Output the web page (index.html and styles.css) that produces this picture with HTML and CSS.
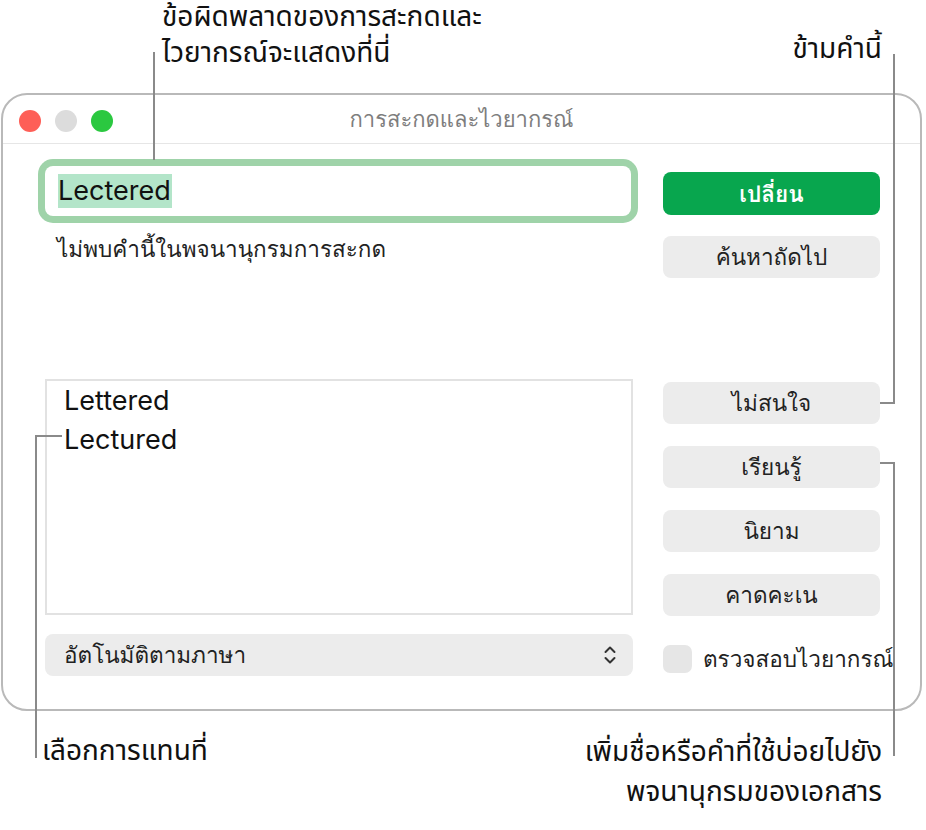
FILE: index.html
```html
<!DOCTYPE html>
<html lang="th">
<head>
<meta charset="utf-8">
<title>การสะกดและไวยากรณ์</title>
<link rel="stylesheet" href="styles.css">
</head>
<body>
<div class="page">
  <header class="notes-top">
    <p class="note note-left">ข้อผิดพลาดของการสะกดและ<br>ไวยากรณ์จะแสดงที่นี่</p>
    <p class="note note-right">ข้ามคำนี้</p>
  </header>

  <section class="window">
    <div class="titlebar">
      <div class="lights">
        <span class="light red"></span>
        <span class="light gray"></span>
        <span class="light green"></span>
      </div>
      <div class="title">การสะกดและไวยากรณ์</div>
    </div>
    <div class="content">
      <div class="col-left">
        <div class="field"><span class="sel">Lectered</span></div>
        <p class="message">ไม่พบคำนี้ในพจนานุกรมการสะกด</p>
        <ul class="list">
          <li>Lettered</li>
          <li>Lectured</li>
        </ul>
        <div class="popup">
          <span>อัตโนมัติตามภาษา</span>
          <svg class="chev" width="12" height="20" viewBox="0 0 12 20"><path d="M1.5 7 L6 2.5 L10.5 7 M1.5 13 L6 17.5 L10.5 13" fill="none" stroke="#333" stroke-width="2" stroke-linecap="round" stroke-linejoin="round"/></svg>
        </div>
      </div>
      <div class="col-right">
        <button class="btn primary">เปลี่ยน</button>
        <button class="btn b-next">ค้นหาถัดไป</button>
        <button class="btn b-ignore">ไม่สนใจ</button>
        <button class="btn">เรียนรู้</button>
        <button class="btn">นิยาม</button>
        <button class="btn">คาดคะเน</button>
        <label class="check"><span class="box"></span><span class="check-label">ตรวจสอบไวยากรณ์</span></label>
      </div>
    </div>
  </section>

  <footer class="notes-bottom">
    <p class="note note-bl">เลือกการแทนที่</p>
    <p class="note note-br">เพิ่มชื่อหรือคำที่ใช้บ่อยไปยัง<br>พจนานุกรมของเอกสาร</p>
  </footer>

  <span class="line l-top"></span>
  <span class="line l-skip-v"></span>
  <span class="line l-skip-h"></span>
  <span class="line l-choose-h"></span>
  <span class="line l-choose-v"></span>
  <span class="line l-learn-h"></span>
  <span class="line l-learn-v"></span>
</div>
</body>
</html>
```
FILE: styles.css
```css
* { box-sizing: border-box; }
html, body { margin: 0; padding: 0; background: #fff; }
body { width: 926px; height: 830px; overflow: hidden; }
.page {
  position: relative;
  width: 926px;
  height: 830px;
  font-family: "Noto Sans Thai", "Noto Sans", "Inter", sans-serif;
  color: #111;
}
p { margin: 0; }

.notes-top {
  height: 93px;
  display: flex;
  justify-content: space-between;
}
.note { font-size: 28px; line-height: 36px; color: #111; }
.note-left { padding-left: 162px; }
.note-right { padding-top: 32px; padding-right: 44px; }

.window {
  margin-left: 1px;
  width: 921px;
  height: 618px;
  border: 2px solid #b9b9b9;
  border-radius: 26px;
  background: #fff;
  font-family: "Loma", "Garuda", "Waree", "Noto Sans Thai Looped", "Noto Sans Thai", "Noto Sans", sans-serif;
}
.titlebar {
  position: relative;
  height: 49px;
  border-bottom: 1px solid #e6e6e6;
  display: flex;
  align-items: center;
  justify-content: center;
}
.lights {
  position: absolute;
  left: 16px;
  top: 15px;
  display: flex;
  gap: 14px;
}
.light { width: 22px; height: 22px; border-radius: 50%; display: block; }
.red { background: #fe5f57; }
.gray { background: #dcdcdc; }
.green { background: #2bc840; }
.title { font-size: 22px; color: #7e7e7e; line-height: 30px; margin-top: 2px; }

.content {
  display: grid;
  grid-template-columns: 588px 217px;
  column-gap: 30px;
  padding: 15px 40px 0 42px;
}
.col-left { display: flex; flex-direction: column; }
.field {
  margin-top: 7px;
  width: 586px;
  height: 50px;
  border-radius: 8px;
  background: #fff;
  box-shadow: 0 0 0 7px #9fd3a9;
  padding: 8px 0 0 13px;
  font-family: "Inter", "Liberation Sans", sans-serif;
  font-size: 27px;
  line-height: 34px;
  color: #111;
}
.sel { background: #b3e5c9; display: inline-block; height: 34px; padding-right: 1px; }
.message { margin-top: 17px; padding-left: 12px; font-size: 22.5px; line-height: 32px; color: #222; }
.list {
  list-style: none;
  margin: 0;
  margin-top: 114px;
  height: 236px;
  border: 2px solid #e2e2e2;
  padding: 0 0 0 17px;
  font-family: "Inter", "Liberation Sans", sans-serif;
  font-size: 27px;
  line-height: 39px;
  color: #111;
}
.popup {
  margin-top: 19px;
  height: 42px;
  border-radius: 8px;
  background: #ececec;
  display: flex;
  align-items: center;
  justify-content: space-between;
  padding: 0 17px 0 19px;
  font-size: 22.5px;
  color: #222;
}
.chev { display: block; }

.col-right { display: flex; flex-direction: column; padding-top: 13px; }
.btn {
  height: 42px;
  border: 0;
  border-radius: 8px;
  background: #ececec;
  font-family: inherit;
  font-size: 22.5px;
  line-height: 30px;
  color: #222;
  padding: 0;
  margin-bottom: 22px;
}
.primary { background: #08a64e; color: #fff; font-weight: 600; height: 43px; margin-bottom: 21px; }
.b-next { margin-bottom: 104px; }
.check { display: flex; align-items: center; gap: 11px; margin-top: 3px; }
.box { width: 29px; height: 28px; border-radius: 7px; background: #e6e6e6; display: block; flex: none; }
.check-label { font-size: 22.5px; color: #222; white-space: nowrap; }

.notes-bottom {
  display: flex;
  justify-content: space-between;
  padding-top: 23px;
}
.note-bl { padding-left: 42px; }
.note-br { padding-right: 44px; text-align: right; line-height: 40px; margin-top: -1px; }

.line { position: absolute; background: #8a8a8a; display: block; }
.l-top { left: 153px; top: 52px; width: 2px; height: 108px; }
.l-skip-v { left: 893px; top: 54px; width: 2px; height: 350px; }
.l-skip-h { left: 880px; top: 402px; width: 15px; height: 2px; }
.l-choose-h { left: 35px; top: 435px; width: 27px; height: 2px; }
.l-choose-v { left: 35px; top: 435px; width: 2px; height: 323px; }
.l-learn-h { left: 880px; top: 462px; width: 15px; height: 2px; }
.l-learn-v { left: 893px; top: 462px; width: 2px; height: 294px; }
```
